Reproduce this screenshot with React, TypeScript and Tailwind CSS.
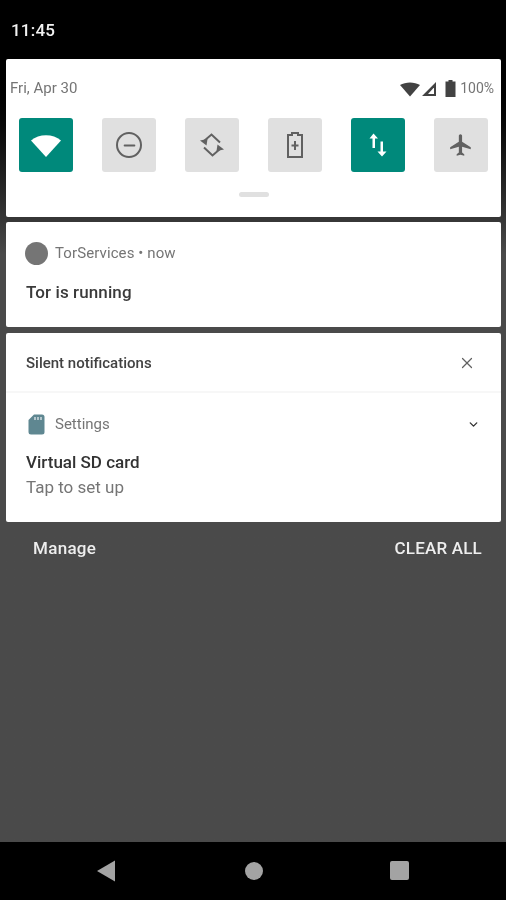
import React from 'react';
import { Minus, X, ChevronDown } from 'lucide-react';

const Tile = ({ active, children }: { active?: boolean; children: React.ReactNode }) => (
  <div
    className={`flex h-[54px] w-[54px] items-center justify-center rounded-[3px] ${active ? 'bg-[#00897b]' : 'bg-[#e0e0e0]'}`}
  >
    {children}
  </div>
);

const App: React.FC = () => {
  return (
    <div className="flex h-[900px] w-[506px] flex-col overflow-hidden bg-black font-['Roboto',sans-serif] blur-[0.4px]">
      {/* status bar */}
      <div className="flex h-[59px] shrink-0 items-start px-[11px] pt-[20px]">
        <span className="text-[17px] font-medium leading-[21px] tracking-[0.2px] text-[#f2f2f2]">11:45</span>
      </div>

      <div className="flex flex-1 flex-col bg-gradient-to-b from-[#000000] via-[#4a4a4a] via-[25%] to-[#4a4a4a] px-[6px]">
        {/* quick settings */}
        <div className="h-[158px] w-[495px] shrink-0 rounded-[2px] bg-white">
          <div className="flex items-center justify-between pl-[4px] pr-[7px] pt-[20px]">
            <span className="text-[15px] leading-[19px] text-[#757575]">Fri, Apr 30</span>
            <div className="flex items-center">
              <svg width="20" height="16" viewBox="0 0 20 16" className="mr-[1px]">
                <path d="M0 4 C5.500 0.500 14.500 0.500 20 4 L10 15.500 Z" fill="#424242" />
              </svg>
              <svg width="16" height="16" viewBox="0 0 16 16" className="mr-[8px]">
                <path d="M1 15 L15 1 V15 Z M12.500 7 L7 13 H13 V7 Z" fill="#424242" fillRule="evenodd" />
              </svg>
              <svg width="11" height="17" viewBox="0 0 11 17" className="mr-[4px]">
                <path d="M3.5 0 H7.5 V1.5 H10.5 V17 H0.5 V1.5 H3.5 Z" fill="#424242" />
              </svg>
              <span className="text-[14px] leading-[19px] text-[#757575]">100%</span>
            </div>
          </div>
          <div className="mt-[20px] flex gap-[29px] pl-[13px]">
            <Tile active>
              <svg width="32" height="26" viewBox="0 0 32 26">
                <path d="M1 8.5 C9 1.5 23 1.5 31 8.5 L16 25 Z" fill="#fff" />
              </svg>
            </Tile>
            <Tile>
              <div className="flex h-[26px] w-[26px] items-center justify-center rounded-full border-[2.5px] border-[#616161]">
                <Minus size={17} strokeWidth={2.5} color="#616161" />
              </div>
            </Tile>
            <Tile>
              <svg width="28" height="28" viewBox="0 0 28 28" fill="none" stroke="#616161" strokeWidth="2">
                <path d="M6 10 L13.500 3.500 L22 11.500" />
                <path d="M22 18 L14.500 24.500 L6 16.500" />
                <path d="M2 9.500 L8.500 14.500 L9.500 8 Z" fill="#616161" stroke="none" />
                <path d="M26 18.500 L19.500 13.500 L18.500 20 Z" fill="#616161" stroke="none" />
              </svg>
            </Tile>
            <Tile>
              <svg width="18" height="26" viewBox="0 0 18 26" fill="none">
                <path d="M6 1 H12 V3 H16 V25 H2 V3 H6 Z" stroke="#616161" strokeWidth="2" />
                <path d="M9 9 V18 M5.5 13.5 H12.5" stroke="#616161" strokeWidth="2" />
              </svg>
            </Tile>
            <Tile active>
              <svg width="20" height="24" viewBox="0 0 20 24" fill="#fff">
                <path d="M5.5 0.5 L10 5.5 H7 V15 H4.5 V5.5 H1.5 Z" />
                <path d="M14 23.5 L9.5 18.5 H12.5 V8.5 H15 V18.5 H18.5 Z" />
              </svg>
            </Tile>
            <Tile>
              <svg width="26" height="26" viewBox="0 0 24 24" fill="#616161">
                <path d="M21 16v-2l-8-5V3.5c0-.83-.67-1.5-1.5-1.5S10 2.67 10 3.5V9l-8 5v2l8-2.5V19l-2 1.5V22l3.500-1 3.500 1v-1.500L13 19v-5.500l8 2.500z" />
              </svg>
            </Tile>
          </div>
          <div className="mt-[20px] flex justify-center">
            <div className="h-[5px] w-[30px] rounded-full bg-[#e0e0e0]" />
          </div>
        </div>

        {/* ongoing notification */}
        <div className="mt-[5px] h-[105px] w-[495px] shrink-0 rounded-[2px] bg-white px-[19px] pt-[20px]">
          <div className="flex items-center gap-[7px]">
            <div className="h-[23px] w-[23px] rounded-full bg-[#757575]" />
            <span className="text-[15px] leading-[23px] tracking-[0.1px] text-[#757575]">TorServices • now</span>
          </div>
          <div className="mt-[15px] pl-[1px] text-[17px] font-medium leading-[24px] tracking-[0.1px] text-[#3a3a3a]">Tor is running</div>
        </div>

        {/* silent notifications */}
        <div className="mt-[6px] h-[189px] w-[495px] shrink-0 rounded-[2px] bg-white">
          <div className="flex h-[60px] items-center justify-between border-b-[2px] border-[#f7f7f7] pl-[20px] pr-[25px] pt-[2px]">
            <span className="text-[15px] font-medium leading-[20px] text-[#424242]">Silent notifications</span>
            <X size={18} strokeWidth={1.6} color="#616161" />
          </div>
          <div className="px-[20px] pt-[21px]">
            <div className="flex items-center">
              <svg width="17" height="21" viewBox="0 0 17 21" className="ml-[2px]">
                <path d="M6 0.500 H14 Q16.500 0.500 16.500 3 V18 Q16.500 20.500 14 20.500 H3 Q0.500 20.500 0.500 18 V6 Z" fill="#5f8791" />
                <path d="M7 3 V6 M10 3 V6 M13 3 V6" stroke="#cfdcdf" strokeWidth="1.500" />
              </svg>
              <span className="ml-[10px] text-[15px] leading-[21px] text-[#757575]">Settings</span>
              <ChevronDown size={13} strokeWidth={2.5} color="#333" className="ml-auto mr-[1px]" />
            </div>
            <div className="mt-[16px] text-[17px] font-medium leading-[23px] text-[#333]">Virtual SD card</div>
            <div className="mt-[2px] text-[17px] leading-[23px] text-[#757575]">Tap to set up</div>
          </div>
        </div>

        {/* footer actions */}
        <div className="flex h-[52px] shrink-0 items-center justify-between pl-[27px] pr-[18px] pt-[2px]">
          <span className="text-[17px] font-medium tracking-[0.3px] text-[#eeeeee]">Manage</span>
          <span className="text-[17px] font-medium tracking-[0.2px] text-[#eeeeee]">CLEAR ALL</span>
        </div>
      </div>

      {/* nav bar */}
      <div className="flex h-[58px] shrink-0 items-center bg-black pb-[1px]">
        <div className="ml-[97px]">
          <svg width="18" height="22" viewBox="0 0 18 22">
            <path d="M0 11 L18 0.500 V21.500 Z" fill="#a3a3a3" />
          </svg>
        </div>
        <div className="ml-[130px] h-[18px] w-[18px] rounded-full bg-[#a3a3a3]" />
        <div className="ml-[127px] h-[19px] w-[19px] rounded-[2px] bg-[#a3a3a3]" />
      </div>
    </div>
  );
};

export default App;
